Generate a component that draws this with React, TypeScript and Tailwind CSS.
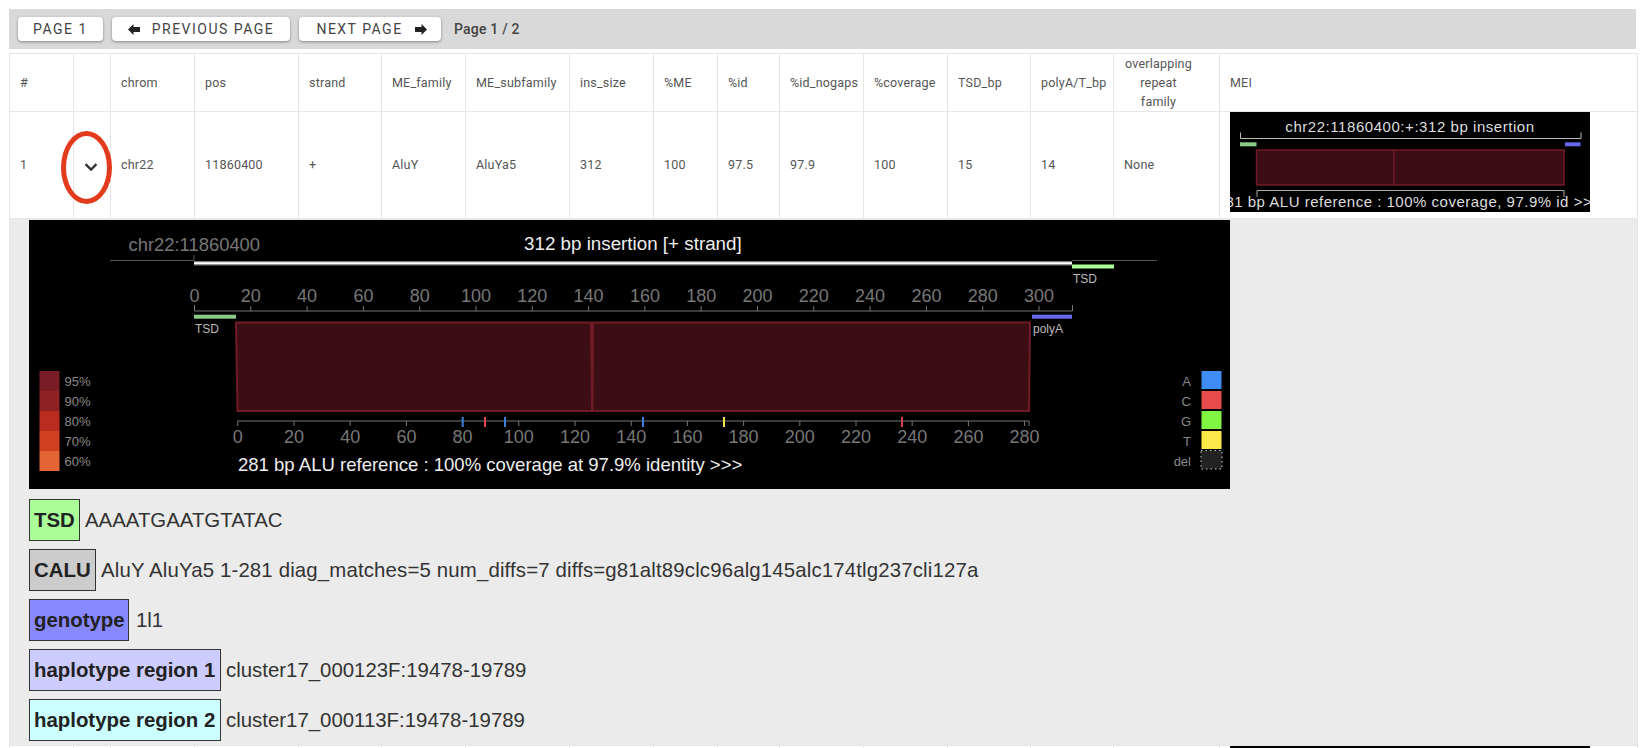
const columnWidths = [64, 37, 84, 104, 83, 84, 104, 84, 64, 62, 84, 84, 83, 83, 106, 418];

const headers = [
  "#",
  "",
  "chrom",
  "pos",
  "strand",
  "ME_family",
  "ME_subfamily",
  "ins_size",
  "%ME",
  "%id",
  "%id_nogaps",
  "%coverage",
  "TSD_bp",
  "polyA/T_bp",
  "overlapping repeat family",
  "MEI",
];

const values = ["1", "", "chr22", "11860400", "+", "AluY", "AluYa5", "312", "100", "97.5", "97.9", "100", "15", "14", "None"];

const details = [
  { label: "TSD", value: "AAAATGAATGTATAC", box: "w-[51px] bg-[#aaff99]", text: "" },
  { label: "CALU", value: "AluY AluYa5 1-281 diag_matches=5 num_diffs=7 diffs=g81alt89clc96alg145alc174tlg237cli127a", box: "w-[67px] bg-[#cccccc]", text: "tracking-[0.15px]" },
  { label: "genotype", value: "1l1", box: "w-[100px] bg-[#8888ff]", text: "ml-[2px]" },
  { label: "haplotype region 1", value: "cluster17_000123F:19478-19789", box: "w-[192px] bg-[#ccccff]", text: "" },
  { label: "haplotype region 2", value: "cluster17_000113F:19478-19789", box: "w-[192px] bg-[#ccffff]", text: "" },
];

const upperTicks = Array.from({ length: 16 }, (_, i) => i * 20);
const lowerTicks = Array.from({ length: 15 }, (_, i) => i * 20);

const mutations = [
  { x: 462.7, color: "#3a7fdc" },
  { x: 485, color: "#e04848" },
  { x: 505, color: "#3a7fdc" },
  { x: 643, color: "#3a7fdc" },
  { x: 724, color: "#f2e24a" },
  { x: 902, color: "#d8404a" },
];

const identityLegend = [
  { label: "95%", color: "#7a1c26" },
  { label: "90%", color: "#8f2222" },
  { label: "80%", color: "#b82d20" },
  { label: "70%", color: "#d24022" },
  { label: "60%", color: "#e56433" },
];

const baseLegend = [
  { label: "A", color: "#3f8cf5" },
  { label: "C", color: "#e64a4a" },
  { label: "G", color: "#80f542" },
  { label: "T", color: "#fbe94a" },
];

const ArrowIcon = ({ right = false }: { right?: boolean }) => (
  <svg width="12" height="11" viewBox="0 0 12 11" className="shrink-0">
    <path d={right ? "M12 5.5 6.5 0v3H0v5h6.5v3z" : "M0 5.5 5.5 0v3H12v5H5.5v3z"} fill="#222" />
  </svg>
);

const ToolbarButton = ({ children, className }: { children: React.ReactNode; className: string }) => (
  <button className={`flex h-6 items-center rounded bg-white text-[14px] uppercase tracking-[1.5px] text-[#444] shadow-[0_1px_3px_rgba(0,0,0,0.4)] ${className}`}>
    {children}
  </button>
);

const InsertionPlot = () => (
  <svg width="1201" height="269" viewBox="29 220 1201 269" className="block bg-black" fontFamily="'Liberation Sans', sans-serif">
    <text x="128.5" y="251" fontSize="18.4" fill="#777">chr22:11860400</text>
    <text x="524" y="250" fontSize="18.8" fill="#eee">312 bp insertion [+ strand]</text>
    <path d="M110 260.5H194M194 255V261M1072 260.5H1157" stroke="#555" />
    <rect x="194" y="261" width="878" height="4.5" fill="#777" />
    <rect x="194" y="262.2" width="878" height="2" fill="#fff" />
    <rect x="1072" y="264.5" width="42" height="4" fill="#aaff99" />
    <text x="1073" y="283" fontSize="12" fill="#bbb">TSD</text>

    <path d="M194.5 305V311H1072.5V305" fill="none" stroke="#777" />
    {upperTicks.map((tick) => {
      const x = 194.5 + tick * 2.815;
      return (
        <g key={tick}>
          <line x1={x} x2={x} y1="306" y2="311" stroke="#777" />
          <text x={x} y="302" fontSize="18" fill="#777" textAnchor="middle">{tick}</text>
        </g>
      );
    })}
    <rect x="194" y="314.7" width="42" height="4" fill="#88cc88" />
    <rect x="1032" y="314.7" width="40" height="4" fill="#6666ee" />
    <text x="195" y="333" fontSize="12" fill="#bbb">TSD</text>
    <text x="1033" y="333" fontSize="12" fill="#bbb">polyA</text>

    <polygon points="236,322.5 591,322.5 592,411 237.5,411" fill="#3d0d14" stroke="#701c26" strokeWidth="2" />
    <polygon points="593,322.5 1030,322.5 1029,411 592.5,411" fill="#3d0d14" stroke="#701c26" strokeWidth="2" />

    <line x1="237.5" x2="1029" y1="421" y2="421" stroke="#777" />
    <line x1="1029" x2="1029" y1="421" y2="426" stroke="#777" />
    {lowerTicks.map((tick) => {
      const x = 237.8 + tick * 2.81;
      return (
        <g key={tick}>
          <line x1={x} x2={x} y1="421" y2="426" stroke="#777" />
          <text x={x} y="443" fontSize="18" fill="#777" textAnchor="middle">{tick}</text>
        </g>
      );
    })}
    {mutations.map((mutation) => (
      <rect key={mutation.x} x={mutation.x - 1} y="417" width="2" height="10" fill={mutation.color} />
    ))}
    <text x="238" y="471" fontSize="18.55" fill="#eee">281 bp ALU reference : 100% coverage at 97.9% identity &gt;&gt;&gt;</text>

    {identityLegend.map((item, i) => (
      <g key={item.label}>
        <rect x="39.5" y={371 + i * 20} width="20" height="20" fill={item.color} />
        <text x="64.5" y={386 + i * 20} fontSize="13" fill="#888">{item.label}</text>
      </g>
    ))}
    {baseLegend.map((item, i) => (
      <g key={item.label}>
        <rect x="1201.5" y={371 + i * 20} width="20" height="18" fill={item.color} />
        <text x="1191" y={386 + i * 20} fontSize="13" fill="#888" textAnchor="end">{item.label}</text>
      </g>
    ))}
    <rect x="1201" y="450.5" width="21" height="18.5" fill="#222" stroke="#ccc" strokeDasharray="1.5 3" />
    <text x="1191" y="466" fontSize="13" fill="#888" textAnchor="end">del</text>
  </svg>
);

const MeiThumbnail = () => (
  <svg width="360" height="100" viewBox="1229 112 360 100" className="block bg-black" fontFamily="'Liberation Sans', sans-serif">
    <text x="1409" y="131.5" fontSize="15" fill="#ddd" textAnchor="middle" letterSpacing="0.55">chr22:11860400:+:312 bp insertion</text>
    <path d="M1239.5 132.5V138.5H1580V132.5" fill="none" stroke="#bbb" />
    <rect x="1239" y="142.3" width="16.5" height="4" fill="#88cc88" />
    <rect x="1564" y="142.3" width="15.5" height="4" fill="#6666ee" />
    <rect x="1255.5" y="150" width="307.5" height="35" fill="#3d0d14" stroke="#701c26" strokeWidth="1.5" />
    <line x1="1393" x2="1393" y1="150" y2="185" stroke="#701c26" strokeWidth="1.5" />
    <path d="M1256 197V190.5H1563V197" fill="none" stroke="#aaa" />
    <text x="1408" y="207" fontSize="15" fill="#ddd" textAnchor="middle" letterSpacing="0.5">281 bp ALU reference : 100% coverage, 97.9% id &gt;&gt;&gt;</text>
  </svg>
);

export default function App() {
  return (
    <div className="h-[748px] overflow-hidden bg-white px-[9px] pt-[9px] font-['Roboto',sans-serif] text-[12.5px] text-[#555]">
      <div className="flex h-10 items-start gap-[9px] bg-[#d9d9d9] pl-[9px] pt-2">
        <ToolbarButton className="w-[85px] justify-center">Page 1</ToolbarButton>
        <ToolbarButton className="w-[178px] justify-center gap-3">
          <ArrowIcon />
          Previous page
        </ToolbarButton>
        <ToolbarButton className="w-[142px] justify-center gap-3 pl-[3px]">
          Next page
          <ArrowIcon right />
        </ToolbarButton>
        <span className="ml-[4px] text-[14px] font-medium leading-6 tracking-[0.2px] text-[#444]">Page 1 / 2</span>
      </div>

      <table className="mt-1 w-[1628px] table-fixed border-collapse">
        <colgroup>
          {columnWidths.map((width, index) => (
            <col key={index} style={{ width }} />
          ))}
        </colgroup>
        <thead>
          <tr className="h-[58px]">
            {headers.map((header, index) => (
              <th
                key={index}
                className={`border border-[#e6e6e6] px-[10px] font-normal leading-[19px] tracking-[0.2px] ${index === 14 ? "pr-[26px] text-center" : "text-left"} ${index === 10 || index === 11 || index === 13 ? "pr-0" : ""}`}
              >
                {index === 14 ? (
                  <>
                    overlapping
                    <br />
                    repeat
                    <br />
                    family
                  </>
                ) : (
                  header
                )}
              </th>
            ))}
          </tr>
        </thead>
        <tbody>
          <tr className="h-[107px]">
            {values.map((value, index) => (
              <td key={index} className="relative border border-[#e6e6e6] px-[10px] tracking-[0.2px]">
                {index === 1 ? (
                  <>
                    <svg width="24" height="24" viewBox="0 0 24 24" className="-ml-[5px] mt-[3px] block">
                      <path d="M7.41 8.59 12 13.17l4.59-4.58L18 10l-6 6-6-6 1.41-1.41z" fill="#333" stroke="#333" strokeWidth="0.5" />
                    </svg>
                    <div className="absolute left-[-13px] top-[19px] h-[73px] w-[51px] rounded-[50%] border-[5px] border-[#e23b1e]" />
                  </>
                ) : (
                  value
                )}
              </td>
            ))}
            <td className="border border-[#e6e6e6] px-[10px] align-top">
              <MeiThumbnail />
            </td>
          </tr>
          <tr>
            <td colSpan={16} className="border border-[#e6e6e6] bg-[#ebebeb] pb-1 pl-[19px] pt-[1px]">
              <InsertionPlot />
              <div className="mt-[10px] flex flex-col gap-2 font-['Liberation_Sans',sans-serif] text-[20.4px] text-[#333]">
                {details.map((detail) => (
                  <div key={detail.label} className="flex h-[42px] items-center gap-[5px]">
                    <span className={`flex h-[42px] shrink-0 items-center whitespace-nowrap border border-[#333] pl-1 font-bold text-[#222] ${detail.box}`}>
                      {detail.label}
                    </span>
                    <span className={detail.text}>{detail.value}</span>
                  </div>
                ))}
              </div>
            </td>
          </tr>
          <tr className="h-[106px]">
            {headers.slice(0, 15).map((header) => (
              <td key={header} className="border border-[#e6e6e6]" />
            ))}
            <td className="border border-[#e6e6e6] px-[10px] align-top">
              <div className="h-[100px] w-[360px] bg-black" />
            </td>
          </tr>
        </tbody>
      </table>
    </div>
  );
}
